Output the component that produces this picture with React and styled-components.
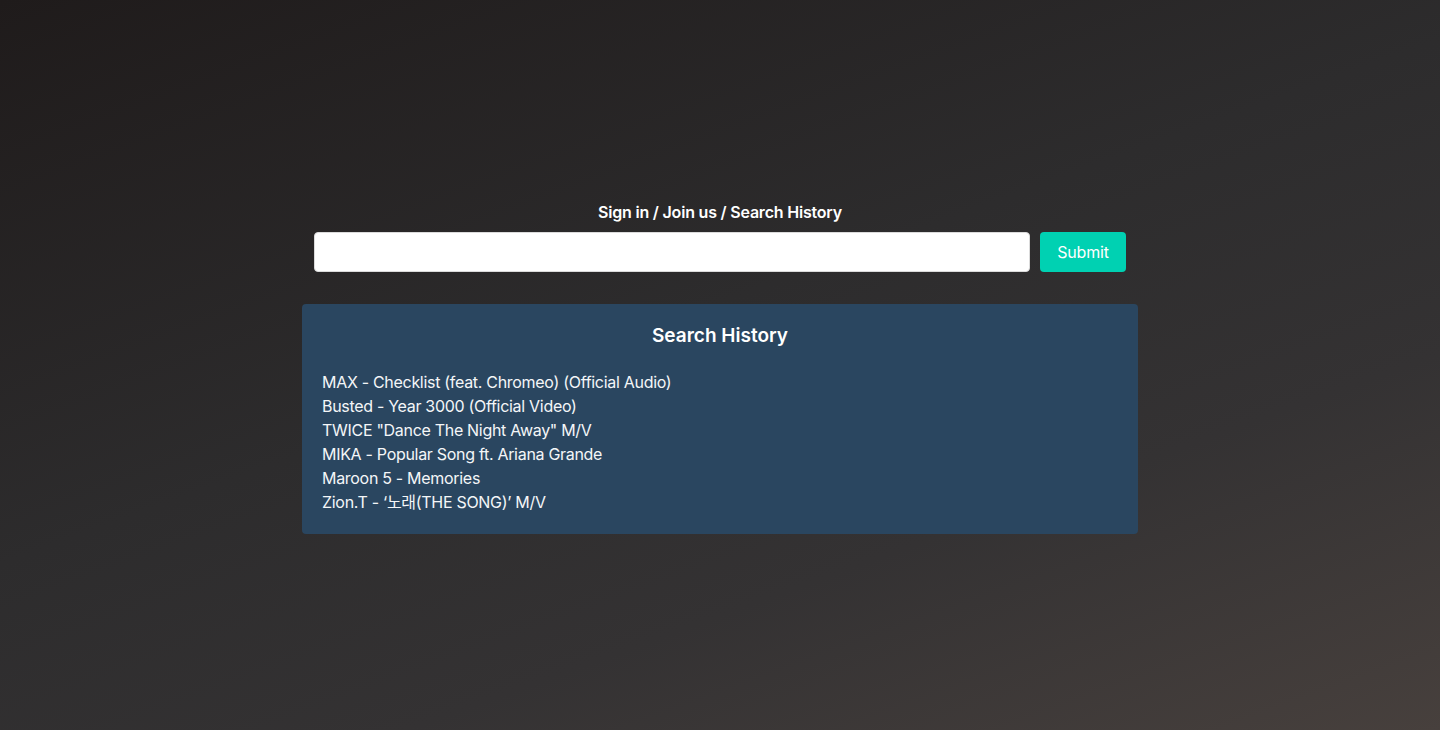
import styled, { createGlobalStyle } from "styled-components";

const GlobalStyle = createGlobalStyle`
  html, body {
    margin: 0;
    padding: 0;
  }
  body {
    min-height: 730px;
    background: linear-gradient(160deg, #1f1b1b 0%, #2d2c2d 45%, #343233 70%, #47403d 100%);
    font-family: Inter, "Noto Sans", "Noto Sans CJK KR", sans-serif;
    color: #ffffff;
  }
`;

const Page = styled.main`
  min-height: 730px;
  padding-top: 200px;
  box-sizing: border-box;
  display: flex;
  justify-content: center;
`;

const Column = styled.div`
  width: 836px;
  display: flex;
  flex-direction: column;
`;

const Label = styled.label`
  display: block;
  text-align: center;
  font-size: 16px;
  font-weight: 600;
  line-height: 24px;
  letter-spacing: -0.2px;
  margin-bottom: 8px;
`;

const FormRow = styled.form`
  display: flex;
  gap: 10px;
  padding: 0 12px;
  margin-bottom: 32px;
`;

const Input = styled.input`
  flex: 1;
  height: 40px;
  box-sizing: border-box;
  border: 1px solid #dbdbdb;
  border-radius: 4px;
  background: #ffffff;
  font-family: inherit;
  font-size: 16px;
  padding: 0 11px;
  outline: none;
`;

const Button = styled.button`
  width: 86px;
  height: 40px;
  border: none;
  border-radius: 4px;
  background: #00d1b2;
  color: #ffffff;
  font-family: inherit;
  font-size: 16px;
  letter-spacing: -0.2px;
  cursor: pointer;
`;

const Card = styled.section`
  background: #2a4660;
  border-radius: 4px;
  padding: 20px;
`;

const Title = styled.h2`
  margin: 1px 0 23px;
  text-align: center;
  font-size: 19px;
  font-weight: 600;
  line-height: 22px;
`;

const List = styled.ul`
  list-style: none;
  margin: 0;
  padding: 0;
`;

const Item = styled.li`
  font-size: 16px;
  line-height: 24px;
  letter-spacing: -0.3px;
  color: #f4f6f8;
`;

const history = [
  "MAX - Checklist (feat. Chromeo) (Official Audio)",
  "Busted - Year 3000 (Official Video)",
  'TWICE "Dance The Night Away" M/V',
  "MIKA - Popular Song ft. Ariana Grande",
  "Maroon 5 - Memories",
  "Zion.T - \u2018노래(THE SONG)\u2019 M/V",
];

const App = () => {
  return (
    <>
      <GlobalStyle />
      <Page>
        <Column>
          <Label htmlFor="search">Sign in / Join us / Search History</Label>
          <FormRow onSubmit={(e) => e.preventDefault()}>
            <Input id="search" type="text" />
            <Button type="submit">Submit</Button>
          </FormRow>
          <Card>
            <Title>Search History</Title>
            <List>
              {history.map((song) => (
                <Item key={song}>{song}</Item>
              ))}
            </List>
          </Card>
        </Column>
      </Page>
    </>
  );
};

export default App;
